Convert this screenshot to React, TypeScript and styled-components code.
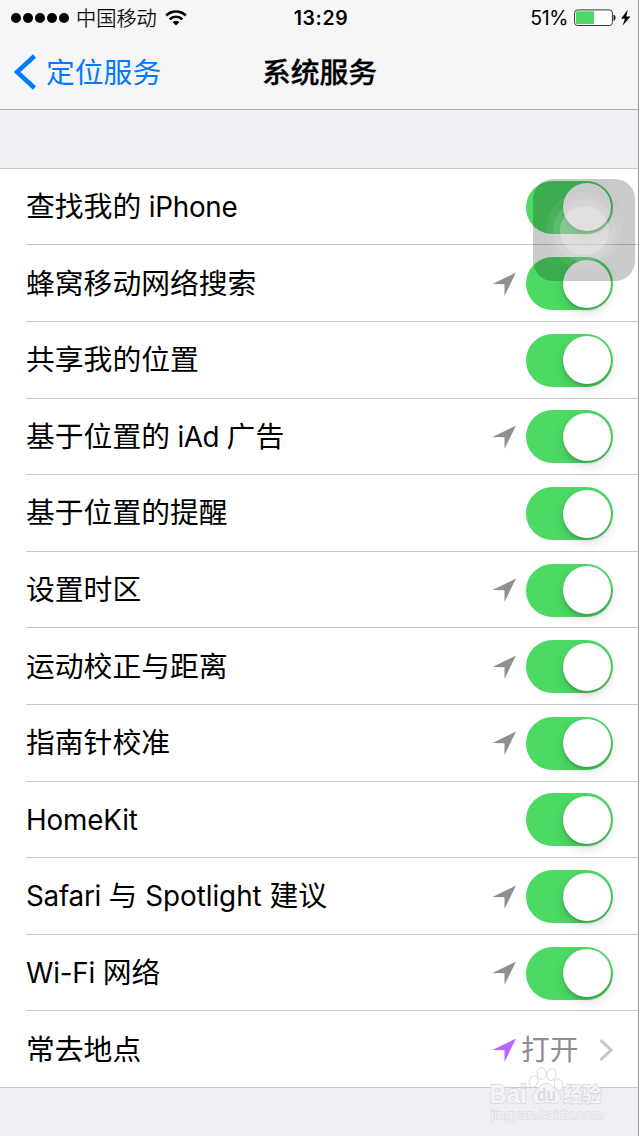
import React from 'react';
import styled, { createGlobalStyle } from 'styled-components';

const GlobalStyle = createGlobalStyle`
  * { box-sizing: border-box; }
  html, body { margin: 0; padding: 0; }
  body {
    background: #efeff4;
    color: #000;
    font-family: Inter, "Noto Sans CJK SC", sans-serif;
  }
`;

const Screen = styled.div`
  position: relative;
  width: 639px;
  height: 1136px;
  overflow: hidden;
  background: #efeff4;
`;

const EdgeLine = styled.div`
  position: absolute;
  top: 0;
  right: 0;
  width: 1px;
  height: 100%;
  background: #98989a;
`;

const Header = styled.header`
  height: 110px;
  background: #f6f6f8;
  border-bottom: 1px solid #b0b0b4;
`;

const StatusBar = styled.div`
  display: grid;
  grid-template-columns: 1fr auto 1fr;
  align-items: center;
  height: 35px;
  padding: 0 8px 0 11px;
  font-size: 20px;
  line-height: 35px;
`;

const StatusGroup = styled.div<{ $end?: boolean }>`
  display: flex;
  align-items: center;
  justify-content: ${(p) => (p.$end ? 'flex-end' : 'flex-start')};
`;

const Dots = styled.div`
  display: flex;
  gap: 2px;
`;

const Dot = styled.span`
  width: 10px;
  height: 10px;
  border-radius: 50%;
  background: #000;
`;

const Carrier = styled.span`
  margin: 0 8px 0 7px;
  font-size: 20.2px;
  font-weight: 300;
  -webkit-text-stroke: 0.25px #000;
`;

const Clock = styled.span`
  padding-top: 1px;
  font-size: 19.5px;
  font-weight: 600;
  letter-spacing: 0.6px;
`;

const Percent = styled.span`
  margin-right: 6px;
  padding-top: 1px;
  font-size: 19.5px;
  letter-spacing: -0.4px;
`;

const NavBar = styled.nav`
  display: grid;
  grid-template-columns: 1fr auto 1fr;
  align-items: center;
  height: 74px;
  padding: 0 14px;
`;

const Back = styled.a`
  display: flex;
  align-items: center;
  gap: 10px;
  color: #007aff;
  font-size: 28.8px;
`;

const BackText = styled.span`
  padding-bottom: 4px;
`;

const Title = styled.h1`
  margin: 0;
  padding-bottom: 4px;
  font-size: 28.8px;
  font-weight: 500;
  -webkit-text-stroke: 0.3px #000;
`;

const List = styled.ul`
  margin: 57.8px 0 0;
  padding: 0;
  list-style: none;
  background: #fff;
  border-top: 1px solid #c8c7cc;
  border-bottom: 1px solid #c8c7cc;
`;

const Row = styled.li`
  display: flex;
  align-items: center;
  height: 76.6px;
  margin-left: 26px;
  padding: 1.2px 26px 0 0;
  & + & { border-top: 1px solid #c8c7cc; }
  &:first-child { height: 75.6px; }
`;

const Label = styled.span`
  flex: 1;
  padding-bottom: 0.4px;
  font-size: 28.8px;
  line-height: 42px;
  white-space: pre;
`;

const Latin = styled.span<{ $spacing: number }>`
  font-size: 27.8px;
  letter-spacing: ${(p) => p.$spacing}px;
`;

const Value = styled.span`
  margin: 0 20.5px 0 5px;
  padding-bottom: 4px;
  color: #8e8e93;
  font-size: 28.8px;
`;

const Track = styled.span`
  display: flex;
  justify-content: flex-end;
  width: 87px;
  height: 53px;
  margin-left: 10px;
  padding: 2.5px;
  border-radius: 27px;
  background: #4cd964;
`;

const Thumb = styled.span`
  width: 48px;
  height: 48px;
  border-radius: 50%;
  background: #fff;
  box-shadow: 0 5px 12px rgba(0, 0, 0, 0.13), 0 2px 3px rgba(0, 0, 0, 0.2);
`;

const AssistiveTouch = styled.div`
  position: absolute;
  left: 533px;
  top: 179px;
  display: grid;
  place-items: center;
  width: 102px;
  height: 102px;
  border-radius: 20px;
  background: rgba(0, 0, 0, 0.205);
`;

const Ring = styled.span<{ $size: number; $alpha: number }>`
  display: grid;
  place-items: center;
  width: ${(p) => p.$size}px;
  height: ${(p) => p.$size}px;
  border-radius: 50%;
  background: rgba(255, 255, 255, ${(p) => p.$alpha});
`;

const Watermark = styled.div`
  position: absolute;
  left: 488px;
  top: 1066px;
  width: 120px;
  height: 60px;
`;

const Arrow = ({ color = '#8e8e93' }: { color?: string }) => (
  <svg width="24" height="24" viewBox="0 0 24 24">
    <path d="M24 .5 12.5 24 12.5 12.3 .5 12Z" fill={color} />
  </svg>
);

const Switch = () => (
  <Track role="switch" aria-checked="true">
    <Thumb />
  </Track>
);

type Part = string | [string, number];
type Item = { parts: Part[]; arrow?: boolean };

const items: Item[] = [
  { parts: ['查找我的', [' iPhone', -0.25]] },
  { parts: ['蜂窝移动网络搜索'], arrow: true },
  { parts: ['共享我的位置'] },
  { parts: ['基于位置的', [' iAd ', -0.4], '广告'], arrow: true },
  { parts: ['基于位置的提醒'] },
  { parts: ['设置时区'], arrow: true },
  { parts: ['运动校正与距离'], arrow: true },
  { parts: ['指南针校准'], arrow: true },
  { parts: [['HomeKit', -0.15]] },
  { parts: [['Safari ', -0.25], '与', [' Spotlight ', -0.03], '建议'], arrow: true },
  { parts: [['Wi-Fi ', -0.2], '网络'], arrow: true },
];

const Logo = () => (
  <svg width="120" height="60" viewBox="0 0 120 60" fill="#f5f5f8" stroke="#dcdce0" strokeWidth="1">
    <ellipse cx="45.500" cy="15.500" rx="4.200" ry="5.800" transform="rotate(15 45.5 15.5)" fill="#fff" />
    <ellipse cx="53.500" cy="7.500" rx="4.500" ry="6" fill="#fff" />
    <ellipse cx="63.500" cy="8.500" rx="4.500" ry="6" transform="rotate(12 63.5 8.5)" fill="#fff" />
    <ellipse cx="70.500" cy="18.500" rx="4.200" ry="5.800" transform="rotate(-15 70.5 18.5)" fill="#fff" />
    <path d="M58 17.500C52 17.500 50 23 47 26C43 30 43.500 37 51 37.500C55 37.500 56 36.500 59 36.500S64 37.500 67 37.500C73 37 74 31 70 26.500C66 23 64 17.500 58 17.500Z" />
    <g fontFamily="'Liberation Sans', 'Noto Sans CJK SC', sans-serif" paintOrder="stroke">
      <text x="1.500" y="36.500" fontSize="26" fontWeight="700" strokeWidth="1.800" textLength="37" lengthAdjust="spacingAndGlyphs">Bai</text>
      <text x="49" y="34.500" fontSize="18" fontWeight="700" textLength="19" lengthAdjust="spacingAndGlyphs" fill="#dcdce0" stroke="none">du</text>
      <text x="75.500" y="35.500" fontSize="20" fontWeight="700" strokeWidth="1.800" textLength="38" lengthAdjust="spacingAndGlyphs">经验</text>
      <text x="3" y="52.500" fontSize="13" strokeWidth="1.300" textLength="112" lengthAdjust="spacingAndGlyphs">jingyan.baidu.com</text>
    </g>
  </svg>
);

export default function App() {
  return (
    <>
      <GlobalStyle />
      <Screen>
        <Header>
          <StatusBar>
            <StatusGroup>
              <Dots>{[0, 1, 2, 3, 4].map((i) => <Dot key={i} />)}</Dots>
              <Carrier>中国移动</Carrier>
              <svg width="22" height="16" viewBox="0 0 22 16" fill="none" stroke="#000">
                <path d="M1.200 5.500A14 14 0 0 1 20.800 5.500" strokeWidth="2.700" />
                <path d="M4.800 9.200A8.900 8.900 0 0 1 17.200 9.200" strokeWidth="2.600" />
                <path d="M11 15.500 7.600 12A4.900 4.900 0 0 1 14.400 12Z" fill="#000" stroke="none" />
              </svg>
            </StatusGroup>
            <Clock>13:29</Clock>
            <StatusGroup $end>
              <Percent>51%</Percent>
              <svg width="57" height="18" viewBox="0 0 57 18">
                <rect x=".6" y=".9" width="37.800" height="15.600" rx="3" fill="#fff" stroke="#333" strokeWidth="1" />
                <rect x="2" y="2.300" width="18" height="12.800" rx="1" fill="#4cd964" />
                <path d="M39.500 5.700C42.300 6 42.300 11.500 39.500 11.800Z" fill="#222" />
                <path d="M53.800 .8 47 9.700H51L48.500 16.700 56.500 7.500H52.200Z" fill="#000" />
              </svg>
            </StatusGroup>
          </StatusBar>
          <NavBar>
            <Back>
              <svg width="22" height="36" viewBox="0 0 22 36">
                <path d="M20.500 2 3 18 20.500 34" fill="none" stroke="#007aff" strokeWidth="4.600" />
              </svg>
              <BackText>定位服务</BackText>
            </Back>
            <Title>系统服务</Title>
          </NavBar>
        </Header>
        <List>
          {items.map((item, i) => (
            <Row key={i}>
              <Label>
                {item.parts.map((p, j) =>
                  typeof p === 'string' ? p : <Latin key={j} $spacing={p[1]}>{p[0]}</Latin>
                )}
              </Label>
              {item.arrow && <Arrow />}
              <Switch />
            </Row>
          ))}
          <Row>
            <Label>常去地点</Label>
            <Arrow color="#b867ff" />
            <Value>打开</Value>
            <svg width="14" height="24" viewBox="0 0 14 24">
              <path d="M1.500 2 12 12 1.500 22" fill="none" stroke="#c7c7cc" strokeWidth="3" />
            </svg>
          </Row>
        </List>
        <AssistiveTouch>
          <Ring $size={76} $alpha={0.07}>
            <Ring $size={63} $alpha={0.12}>
              <Ring $size={49} $alpha={0.25} />
            </Ring>
          </Ring>
        </AssistiveTouch>
        <Watermark><Logo /></Watermark>
        <EdgeLine />
      </Screen>
    </>
  );
}
